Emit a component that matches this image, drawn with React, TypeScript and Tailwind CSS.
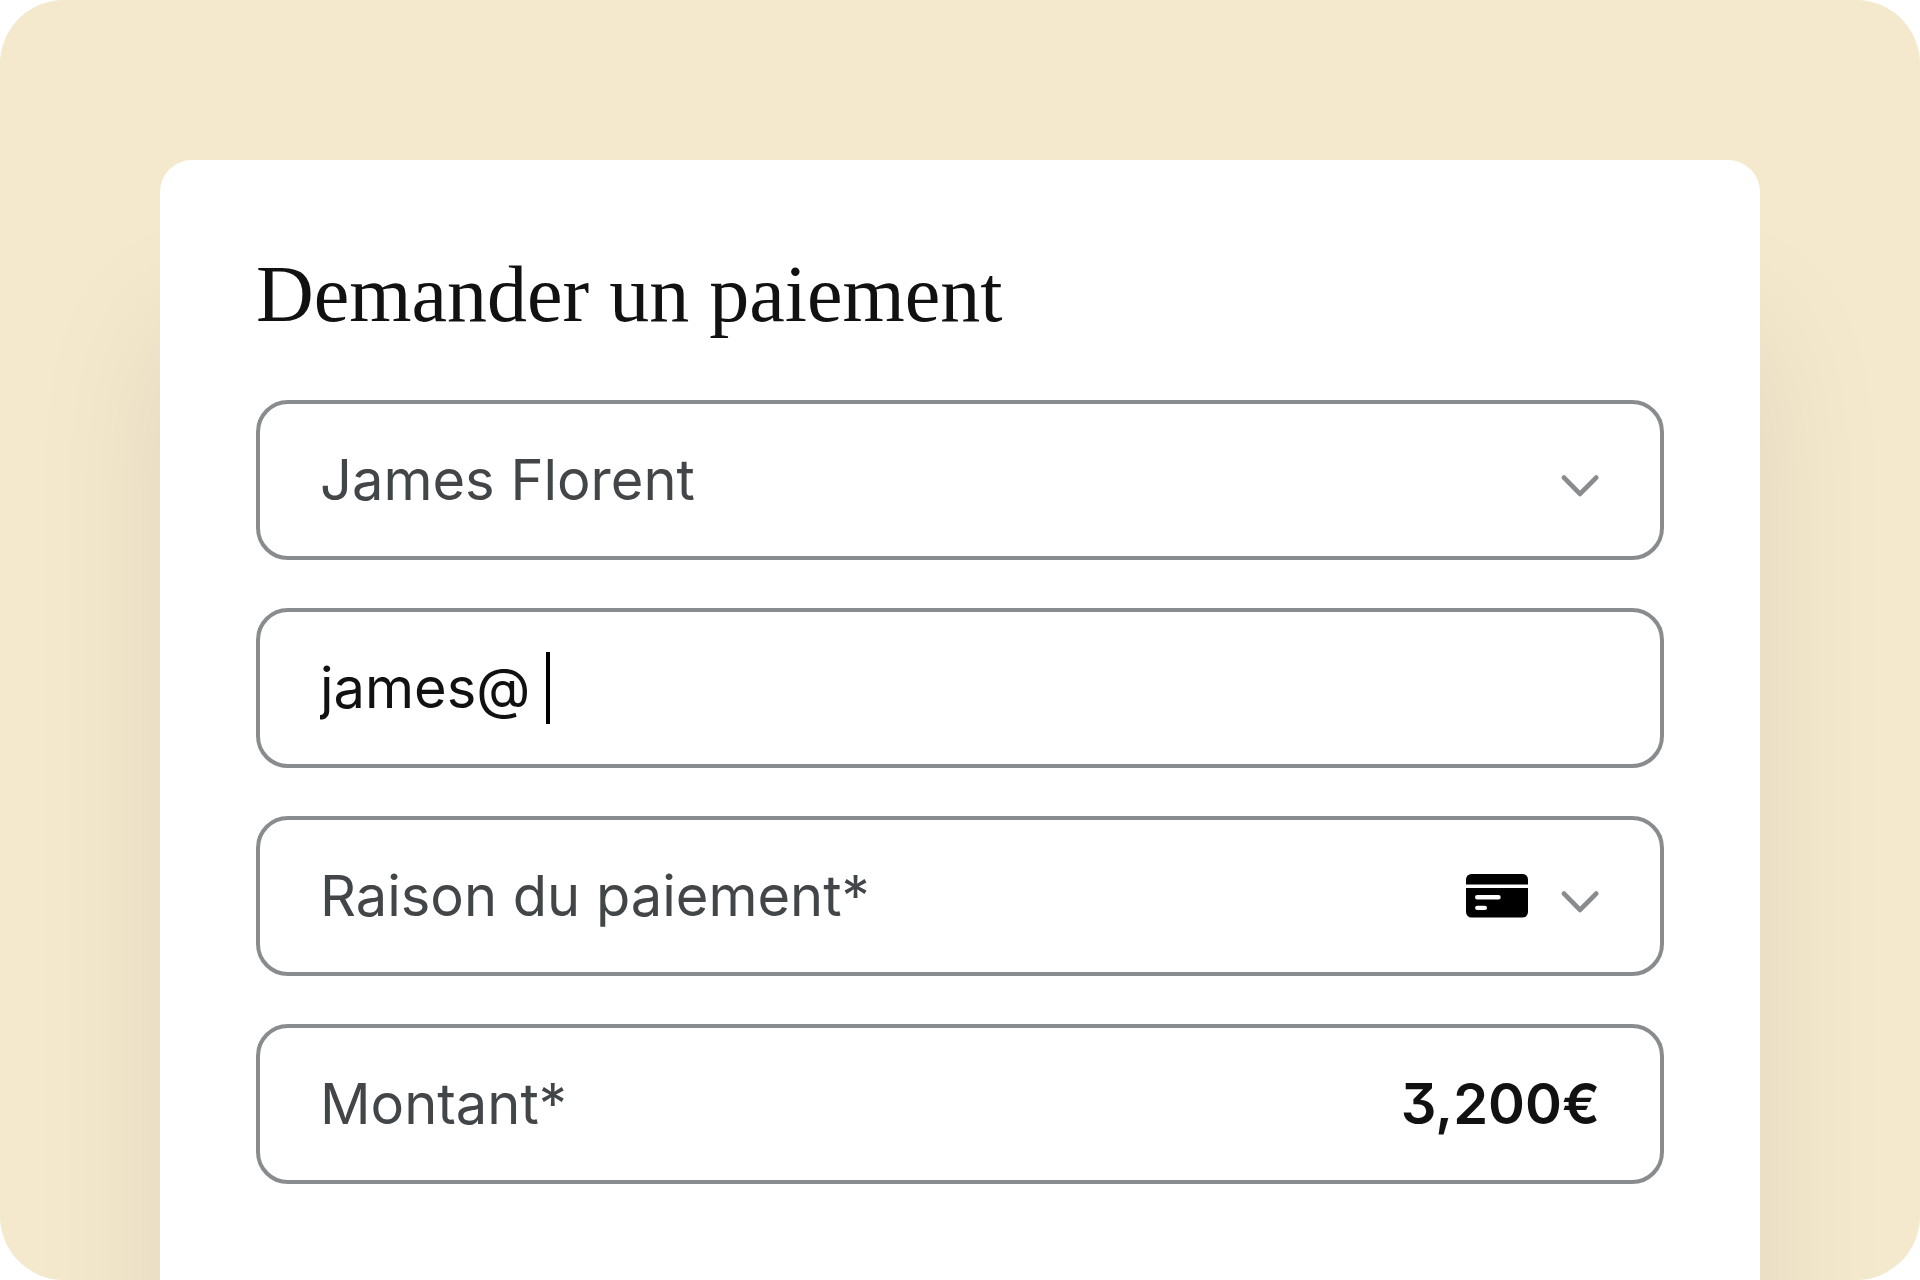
import React, { useState } from 'react';

// Field shell shared by every row of the form
const FIELD =
  'flex h-40 w-full items-center rounded-4xl border-4 border-[#898c8e] px-[60px]';
const SELECT =
  'h-full min-w-0 flex-1 cursor-pointer appearance-none bg-transparent text-[#434648] outline-none';

function ChevronIcon() {
  return (
    <svg className="pointer-events-none size-10 shrink-0" viewBox="0 0 40 40" fill="none" aria-hidden="true">
      <path d="M4 17.6 20 33.9 36.2 17.6" stroke="#898c8e" strokeWidth="4.8" strokeLinecap="round" strokeLinejoin="round" />
    </svg>
  );
}

function CardIcon() {
  return (
    <svg className="pointer-events-none h-11 w-[62px] shrink-0" viewBox="0 0 62 44" aria-hidden="true">
      <path d="M0 10.5V5.5A5.5 5.5 0 0 1 5.5 0h51A5.5 5.5 0 0 1 62 5.5v5Z" fill="#000" />
      <path
        fillRule="evenodd"
        fill="#000"
        d="M0 14h62v24a5.5 5.5 0 0 1-5.5 5.5h-51A5.5 5.5 0 0 1 0 38Z
           M11.2 21a2.2 2.2 0 0 0 0 4.4h21.3a2.2 2.2 0 0 0 0-4.4Z
           M11.2 31.8a2.1 2.1 0 0 0 0 4.2h7.7a2.1 2.1 0 0 0 0-4.2Z"
      />
    </svg>
  );
}

export default function App() {
  const [payer, setPayer] = useState('james');
  const [email, setEmail] = useState('james@ ');
  const [reason, setReason] = useState('');
  const [amount, setAmount] = useState('3,200€');

  return (
    <main className="flex min-h-screen flex-col overflow-hidden rounded-[64px] bg-[#f4e9cd] px-40 pt-40">
      <form className="flex flex-1 flex-col rounded-t-4xl bg-white px-24 pt-24 pb-24 font-['Inter',sans-serif] text-[56px] leading-[72px] shadow-[0_160px_144px_rgba(20,30,0,0.08)]">
        <h1 className="mb-[68px] font-['Liberation_Serif',serif] text-[80px] leading-[76px] text-[#111]">
          Demander un paiement
        </h1>

        <div className="flex flex-col gap-12">
          <div className={FIELD}>
            <select aria-label="Payeur" className={SELECT} value={payer} onChange={e => setPayer(e.target.value)}>
              <option value="james">James Florent</option>
            </select>
            <ChevronIcon />
          </div>

          {/* email being typed, with its caret */}
          <label className={`${FIELD} cursor-text`}>
            <input
              type="text"
              inputMode="email"
              aria-label="Email"
              className="field-sizing-content h-[72px] bg-transparent text-[#111] caret-transparent outline-none"
              value={email}
              onChange={e => setEmail(e.target.value)}
            />
            <span className="h-[72px] w-1 bg-black" />
          </label>

          <div className={FIELD}>
            <select aria-label="Raison du paiement" className={SELECT} value={reason} onChange={e => setReason(e.target.value)}>
              <option value="">Raison du paiement*</option>
            </select>
            <div className="flex items-center gap-8">
              <CardIcon />
              <ChevronIcon />
            </div>
          </div>

          <div className={FIELD}>
            <label htmlFor="amount" className="text-[#434648]">Montant*</label>
            <input
              id="amount"
              type="text"
              className="h-[72px] min-w-0 flex-1 bg-transparent text-right font-semibold text-[#111] outline-none [font-feature-settings:'cv09']"
              value={amount}
              onChange={e => setAmount(e.target.value)}
            />
          </div>
        </div>
      </form>
    </main>
  );
}
